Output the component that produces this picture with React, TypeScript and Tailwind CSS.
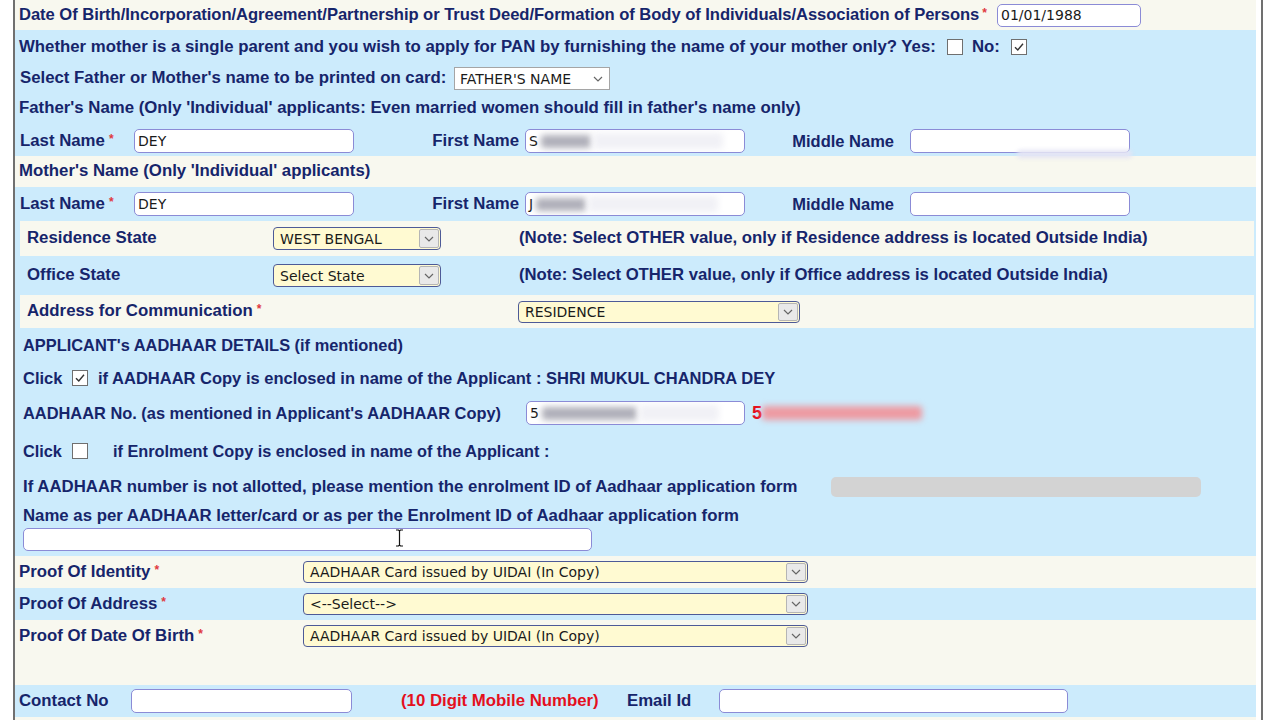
import React from "react";

const IN_FONT = "font-['DejaVu_Sans',sans-serif] font-normal text-[14px] text-[#1a1a1a]";

function Chevron() {
  return (
    <svg width="10" height="6" viewBox="0 0 10 6" fill="none">
      <path d="M1 1 L5 5 L9 1" stroke="#666" strokeWidth="1.2" />
    </svg>
  );
}

function TextBox({ cls, children }: { cls: string; children?: React.ReactNode }) {
  return (
    <div
      className={
        "flex items-center bg-white border border-[#8b8bd6] rounded-[5px] pl-[3px] overflow-hidden shrink-0 " +
        IN_FONT +
        " " +
        cls
      }
    >
      {children}
    </div>
  );
}

function YSelect({ cls, text }: { cls: string; text: string }) {
  return (
    <div
      className={
        "flex items-stretch bg-[#fffad2] border border-[#4d5a97] rounded-[4px] overflow-hidden shrink-0 " +
        IN_FONT +
        " " +
        cls
      }
    >
      <span className="flex-1 flex items-center pl-[6px] whitespace-nowrap">{text}</span>
      <span className="w-[20px] m-[1px] bg-[#e9e9e9] border border-[#b5b5b5] rounded-[2px] flex items-center justify-center">
        <Chevron />
      </span>
    </div>
  );
}

function Check({ checked }: { checked?: boolean }) {
  return (
    <span className="w-[16px] h-[16px] border border-[#6f6f6f] bg-white flex items-center justify-center shrink-0">
      {checked && (
        <svg width="12" height="12" viewBox="0 0 12 12" fill="none">
          <path d="M2 6.2 L4.8 9 L10 2.8" stroke="#333" strokeWidth="1.4" />
        </svg>
      )}
    </span>
  );
}

function Star() {
  return <span className="text-[#e0393e] text-[12px] align-[3px] ml-[4px]">*</span>;
}

function Blob({ cls }: { cls: string }) {
  return <span className={"rounded-[3px] blur-[3px] shrink-0 " + cls} />;
}

function NameRow({ first }: { first: string }) {
  return (
    <div className="flex items-center h-full pl-[5px]">
      <div className="w-[114px] shrink-0">
        Last Name
        <Star />
      </div>
      <TextBox cls="w-[220px] h-[24px]">DEY</TextBox>
      <div className="w-[171px] shrink-0 text-right pr-[6px]">First Name</div>
      <TextBox cls="w-[220px] h-[24px]">
        <span>{first}</span>
        <Blob cls="ml-[3px] w-[50px] h-[13px] bg-[#b0b0ba]" />
        <Blob cls="ml-[2px] w-[130px] h-[16px] bg-[#f1f1f6]" />
      </TextBox>
      <div className="w-[165px] shrink-0 text-right pr-[16px] text-[16.5px]">Middle Name</div>
      <TextBox cls="w-[220px] h-[24px]" />
    </div>
  );
}

export default function App() {
  const blue = "bg-[#ccebfc]";
  const cream = "bg-[#f8f8ef]";
  return (
    <div className="w-[1280px] h-[720px] overflow-hidden bg-white relative font-['Liberation_Sans',Arial,sans-serif] font-bold text-[16.8px] text-[#16256b] leading-none">
      <div className="ml-[13px] w-[1250px] h-full border-x-2 border-[#707070] pr-[5px] flex flex-col">
        {/* DOB */}
        <div className={"h-[30px] flex items-center pl-[4px] shrink-0 " + cream}>
          <div className="w-[978px] shrink-0 whitespace-nowrap text-[16.6px] tracking-[-0.05px]">
            Date Of Birth/Incorporation/Agreement/Partnership or Trust Deed/Formation of Body of Individuals/Association of Persons
            <span className="text-[#e0393e] text-[12px] align-[3px] ml-[3px]">*</span>
          </div>
          <TextBox cls="w-[144px] h-[23px]">01/01/1988</TextBox>
        </div>

        {/* blue block */}
        <div className={"h-[126px] flex flex-col shrink-0 " + blue}>
          <div className="h-[34px] flex items-center pl-[4px] whitespace-nowrap">
            <span>
              Whether mother is a single parent and you wish to apply for PAN by furnishing the name of your mother only? Yes:
            </span>
            <span className="ml-[11px]">
              <Check />
            </span>
            <span className="ml-[9px]">No:</span>
            <span className="ml-[11px]">
              <Check checked />
            </span>
          </div>
          <div className="h-[29px] flex items-center pl-[5px] whitespace-nowrap">
            <span className="w-[434px] shrink-0">Select Father or Mother's name to be printed on card:</span>
            <div className={"w-[156px] h-[23px] bg-white border border-[#a5a5a5] flex items-center justify-between pl-[5px] pr-[6px] " + IN_FONT}>
              <span>FATHER'S NAME</span>
              <Chevron />
            </div>
          </div>
          <div className="h-[30px] flex items-center pl-[4px] whitespace-nowrap">
            Father's Name (Only 'Individual' applicants: Even married women should fill in father's name only)
          </div>
          <div className="h-[33px] pt-[3px]">
            <NameRow first="S" />
          </div>
        </div>

        <div className={"h-[31px] flex items-center pl-[4px] shrink-0 relative " + cream}>
          Mother's Name (Only 'Individual' applicants)
          <span className="absolute left-[1002px] top-[-6px] w-[115px] h-[8px] bg-[#e4e4f4] blur-[2px] rounded" />
        </div>
        <div className={"h-[34px] shrink-0 " + blue}>
          <NameRow first="J" />
        </div>

        {/* inner table */}
        <div className={"h-[107px] flex flex-col gap-[2px] pl-[5px] pr-[2px] shrink-0 " + blue}>
          <div className={"h-[35px] flex items-center pl-[7px] whitespace-nowrap " + cream}>
            <span className="w-[246px] shrink-0">Residence State</span>
            <YSelect cls="w-[168px] h-[23px]" text="WEST BENGAL" />
            <span className="ml-[78px]">
              (Note: Select OTHER value, only if Residence address is located Outside India)
            </span>
          </div>
          <div className={"h-[35px] flex items-center pl-[7px] whitespace-nowrap " + blue}>
            <span className="w-[246px] shrink-0">Office State</span>
            <YSelect cls="w-[168px] h-[23px]" text="Select State" />
            <span className="ml-[78px] text-[16.7px]">
              (Note: Select OTHER value, only if Office address is located Outside India)
            </span>
          </div>
          <div className={"h-[33px] flex items-center pl-[7px] whitespace-nowrap " + cream}>
            <span className="w-[491px] shrink-0">
              Address for Communication
              <Star />
            </span>
            <YSelect cls="w-[282px] h-[22px]" text="RESIDENCE" />
          </div>
        </div>

        {/* aadhaar block */}
        <div className={"h-[228px] flex flex-col pl-[8px] whitespace-nowrap shrink-0 relative " + blue}>
          <div className="h-[34px] flex items-center text-[16.4px]">APPLICANT's AADHAAR DETAILS (if mentioned)</div>
          <div className="h-[32px] flex items-center text-[16.5px]">
            <span className="w-[49px] shrink-0">Click</span>
            <Check checked />
            <span className="ml-[10px]">
              if AADHAAR Copy is enclosed in name of the Applicant : SHRI MUKUL CHANDRA DEY
            </span>
          </div>
          <div className="h-[38px] flex items-center">
            <span className="w-[503px] shrink-0 text-[16.4px]">AADHAAR No. (as mentioned in Applicant's AADHAAR Copy)</span>
            <TextBox cls="w-[219px] h-[24px]">
              <span>5</span>
              <Blob cls="ml-[3px] w-[95px] h-[13px] bg-[#b0b0ba]" />
              <Blob cls="ml-[2px] w-[80px] h-[16px] bg-[#f1f1f6]" />
            </TextBox>
            <span className="ml-[7px] text-[#e4101e] text-[18px]">5</span>
            <Blob cls="w-[160px] h-[14px] bg-[#ee9aa2]" />
          </div>
          <div className="h-[38px] flex items-center text-[16.3px]">
            <span className="w-[49px] shrink-0">Click</span>
            <Check />
            <span className="ml-[25px]">if Enrolment Copy is enclosed in name of the Applicant :</span>
          </div>
          <div className="h-[34px] flex items-center">
            <span className="w-[808px] shrink-0">
              If AADHAAR number is not allotted, please mention the enrolment ID of Aadhaar application form
            </span>
            <div className="w-[370px] h-[20px] bg-[#d3d3d3] rounded-[5px]" />
          </div>
          <div className="h-[24px] flex items-center">
            Name as per AADHAAR letter/card or as per the Enrolment ID of Aadhaar application form
          </div>
          <div className="h-[28px] flex items-start">
            <TextBox cls="w-[569px] h-[23px]" />
          </div>
          <svg
            className="absolute left-[380px] top-[201px]"
            width="9"
            height="18"
            viewBox="0 0 9 18"
            fill="none"
          >
            <path d="M1 1 H3.5 L4.5 2 L5.5 1 H8 M4.5 2 V16 M1 17 H3.5 L4.5 16 L5.5 17 H8" stroke="#fff" strokeWidth="3" />
            <path d="M1 1 H3.5 L4.5 2 L5.5 1 H8 M4.5 2 V16 M1 17 H3.5 L4.5 16 L5.5 17 H8" stroke="#111" strokeWidth="1.2" />
          </svg>
        </div>

        {/* proofs */}
        <div className={"h-[32px] flex items-center pl-[4px] whitespace-nowrap shrink-0 " + cream}>
          <span className="w-[284px] shrink-0">
            Proof Of Identity
            <Star />
          </span>
          <YSelect cls="w-[505px] h-[22px]" text="AADHAAR Card issued by UIDAI (In Copy)" />
        </div>
        <div className={"h-[32px] flex items-center pl-[4px] whitespace-nowrap shrink-0 " + blue}>
          <span className="w-[284px] shrink-0">
            Proof Of Address
            <Star />
          </span>
          <YSelect cls="w-[505px] h-[22px]" text="<--Select-->" />
        </div>
        <div className={"h-[65px] pt-[5px] pl-[4px] whitespace-nowrap shrink-0 " + cream}>
          <div className="flex items-center">
            <span className="w-[284px] shrink-0">
              Proof Of Date Of Birth
              <Star />
            </span>
            <YSelect cls="w-[505px] h-[22px]" text="AADHAAR Card issued by UIDAI (In Copy)" />
          </div>
        </div>
        <div className={"h-[32px] flex items-center pl-[4px] whitespace-nowrap shrink-0 " + blue}>
          <span className="w-[112px] shrink-0">Contact No</span>
          <TextBox cls="w-[221px] h-[24px]" />
          <span className="w-[49px] shrink-0" />
          <span className="w-[226px] shrink-0 text-[#e4101e]">(10 Digit Mobile Number)</span>
          <span className="w-[92px] shrink-0">Email Id</span>
          <TextBox cls="w-[349px] h-[24px]" />
        </div>
        <div className={"flex-1 " + cream} />
      </div>
    </div>
  );
}
